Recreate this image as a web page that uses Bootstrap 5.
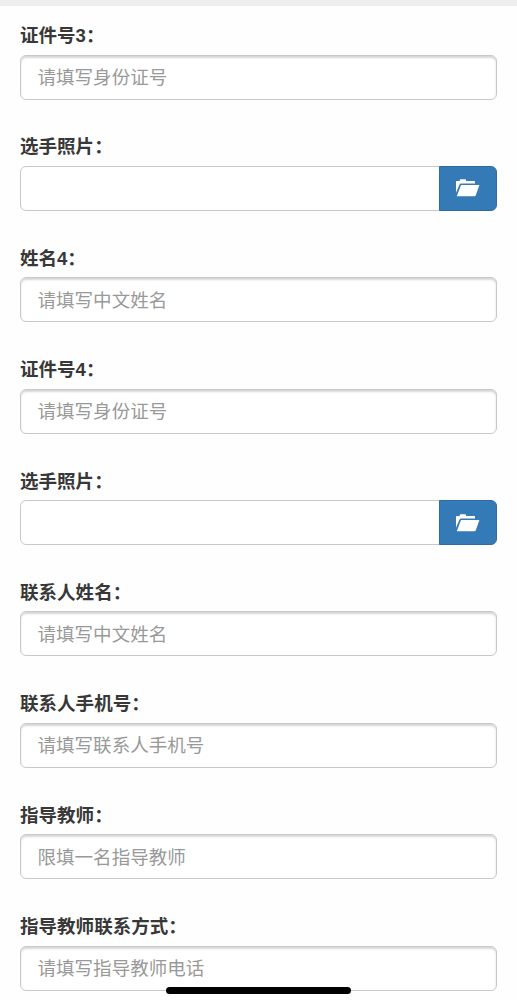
<!DOCTYPE html>
<html lang="zh-CN">
<head>
<meta charset="utf-8">
<meta name="viewport" content="width=device-width, initial-scale=1">
<title>报名表</title>
<link href="https://cdn.jsdelivr.net/npm/bootstrap@5.3.0/dist/css/bootstrap.min.css" rel="stylesheet">
<style>
body { font-family: "Liberation Sans", "Noto Sans CJK SC", sans-serif; font-size: 18.55px; color: #333; background: #fefefe; height: 1000px; overflow: hidden; }
.top-strip { height: 6px; background: #eee; }
.entry-form { padding: 15px 20px 0; }
.field { height: 111.4px; }
.field .form-label { display: block; height: 33.5px; line-height: 29px; margin: 0; font-weight: 700; color: #383838; }
.field .form-control { height: 45px; padding: 2px 17px 0 16.5px; font-size: 18.55px; line-height: 41px; color: #555; background: #fff; border: 1px solid #c8c8c8; border-radius: 6px; box-shadow: inset 0 2px 2px rgba(0,0,0,.16); }
.field .form-control::placeholder { color: #999; opacity: 1; }
.field .input-group .form-control { box-shadow: none; }
.browse { width: 58px; height: 45px; padding: 0; background: #337ab7; border: 1px solid #2e6da4; border-radius: 6px; }
.home-bar { left: 166px; top: 987px; width: 185px; height: 7px; background: #000; z-index: 5; }
</style>
</head>
<body>
<div class="top-strip"></div>
<form class="entry-form">
  <div class="field"><label class="form-label" for="id3">证件号3：</label><input class="form-control" id="id3" placeholder="请填写身份证号"></div>
  <div class="field"><label class="form-label" for="photo3">选手照片：</label>
    <div class="input-group"><input class="form-control" id="photo3">
      <button type="button" class="btn browse d-flex align-items-center justify-content-center" aria-label="浏览"><svg width="24" height="18" viewBox="0 0 24 18" fill="#fff"><path d="M0 13.8V2.8Q0 2 .8 2H3.8V1Q3.8.3 4.5.3H9.3Q10 .3 10 1V2H18.2Q19 2 19 2.8V4.4H5.2Q4 4.4 3.5 5.4Z"/><path d="M5 5.9H23.4L19.7 16.5Q19.4 17.3 18.5 17.3H.8Z"/></svg></button>
    </div></div>
  <div class="field"><label class="form-label" for="name4">姓名4：</label><input class="form-control" id="name4" placeholder="请填写中文姓名"></div>
  <div class="field"><label class="form-label" for="id4">证件号4：</label><input class="form-control" id="id4" placeholder="请填写身份证号"></div>
  <div class="field"><label class="form-label" for="photo4">选手照片：</label>
    <div class="input-group"><input class="form-control" id="photo4">
      <button type="button" class="btn browse d-flex align-items-center justify-content-center" aria-label="浏览"><svg width="24" height="18" viewBox="0 0 24 18" fill="#fff"><path d="M0 13.8V2.8Q0 2 .8 2H3.8V1Q3.8.3 4.5.3H9.3Q10 .3 10 1V2H18.2Q19 2 19 2.8V4.4H5.2Q4 4.4 3.5 5.4Z"/><path d="M5 5.9H23.4L19.7 16.5Q19.4 17.3 18.5 17.3H.8Z"/></svg></button>
    </div></div>
  <div class="field"><label class="form-label" for="contact">联系人姓名：</label><input class="form-control" id="contact" placeholder="请填写中文姓名"></div>
  <div class="field"><label class="form-label" for="mobile">联系人手机号：</label><input class="form-control" id="mobile" placeholder="请填写联系人手机号"></div>
  <div class="field"><label class="form-label" for="teacher">指导教师：</label><input class="form-control" id="teacher" placeholder="限填一名指导教师"></div>
  <div class="field"><label class="form-label" for="tel">指导教师联系方式：</label><input class="form-control" id="tel" placeholder="请填写指导教师电话"></div>
</form>
<div class="home-bar position-fixed rounded-pill"></div>
<script src="https://cdn.jsdelivr.net/npm/bootstrap@5.3.0/dist/js/bootstrap.bundle.min.js"></script>
</body>
</html>
